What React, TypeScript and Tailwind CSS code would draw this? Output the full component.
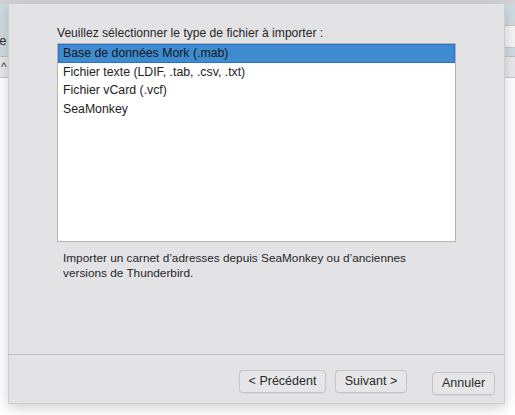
import { useState } from "react";

const types = [
  "Base de données Mork (.mab)",
  "Fichier texte (LDIF, .tab, .csv, .txt)",
  "Fichier vCard (.vcf)",
  "SeaMonkey",
];

const Btn = ({ label, w }: { label: string; w: string }) => (
  <button
    className={`h-[23px] ${w} rounded-[4px] border border-[#c4c4c6] bg-[#e6e6e8] text-[12.5px] text-[#2a2a2a] shadow-[0_1px_0_rgba(0,0,0,0.04)]`}
  >
    {label}
  </button>
);

export default function App() {
  const [sel, setSel] = useState(0);

  return (
    <div
      className="relative w-[515px] h-[415px] overflow-hidden bg-white"
      style={{ fontFamily: '"Liberation Sans", Arial, sans-serif' }}
    >
      {/* window behind the sheet */}
      <div className="flex flex-col h-full">
        <div className="h-[4px] bg-[#d2d2d4]" />
        <div className="h-[53px] bg-[#cddbe0] border-b border-[#b9c4c8] flex items-end justify-between pb-[6px]">
          <span className="text-[13px] leading-[16px] text-[#333] -ml-[5px] mb-[1px]">re</span>
          <div className="w-[20px] h-[23px] mb-[2px] -mr-[8px] rounded-[4px] border border-[#c8c8c8] bg-[#f4f4f4]" />
        </div>
        <div className="h-[21px] bg-[#e8e8ea] border-b border-[#c6c6c8] flex items-center">
          <span className="text-[12px] text-[#444] ml-[1px]">^</span>
        </div>
        <div className="flex-1 bg-white" />
      </div>

      {/* import sheet */}
      <div className="absolute left-[8px] top-[4px] w-[497px] h-[400px] bg-[#e3e3e5] border border-[#cdcdcf] border-t-0 shadow-[0_4px_12px_rgba(0,0,0,0.18)] flex flex-col">
        <div className="flex-1 px-[48px] pt-[21px]">
          <p className="text-[12.1px] text-[#262626] leading-[16px] whitespace-nowrap">
            Veuillez sélectionner le type de fichier à importer :
          </p>
          <ul className="mt-[2px] h-[199px] bg-white border border-[#b4b4b6]">
            {types.map((t, i) => (
              <li
                key={t}
                onClick={() => setSel(i)}
                className={`h-[18.5px] flex items-center text-[12.3px] whitespace-nowrap ${
                  sel === i
                    ? "bg-[#3f8bd0] text-[#101820] border border-[#2a6ed4] px-[4px]"
                    : "text-[#222] px-[5px]"
                }`}
              >
                {t}
              </li>
            ))}
          </ul>
          <p className="mt-[9px] pl-[6px] text-[11.8px] leading-[15px] text-[#262626] whitespace-nowrap">
            Importer un carnet d’adresses depuis SeaMonkey ou d’anciennes
            <br />
            versions de Thunderbird.
          </p>
        </div>
        <div className="h-[49px] border-t border-[#bdbdbf] flex items-start pt-[15px] pr-[9px]">
          <div className="flex-1" />
          <div className="flex gap-[9px]">
            <Btn label="< Précédent" w="w-[87px]" />
            <Btn label="Suivant >" w="w-[72px]" />
          </div>
          <div className="ml-[25px]">
            <Btn label="Annuler" w="w-[63px]" />
          </div>
        </div>
      </div>
    </div>
  );
}
